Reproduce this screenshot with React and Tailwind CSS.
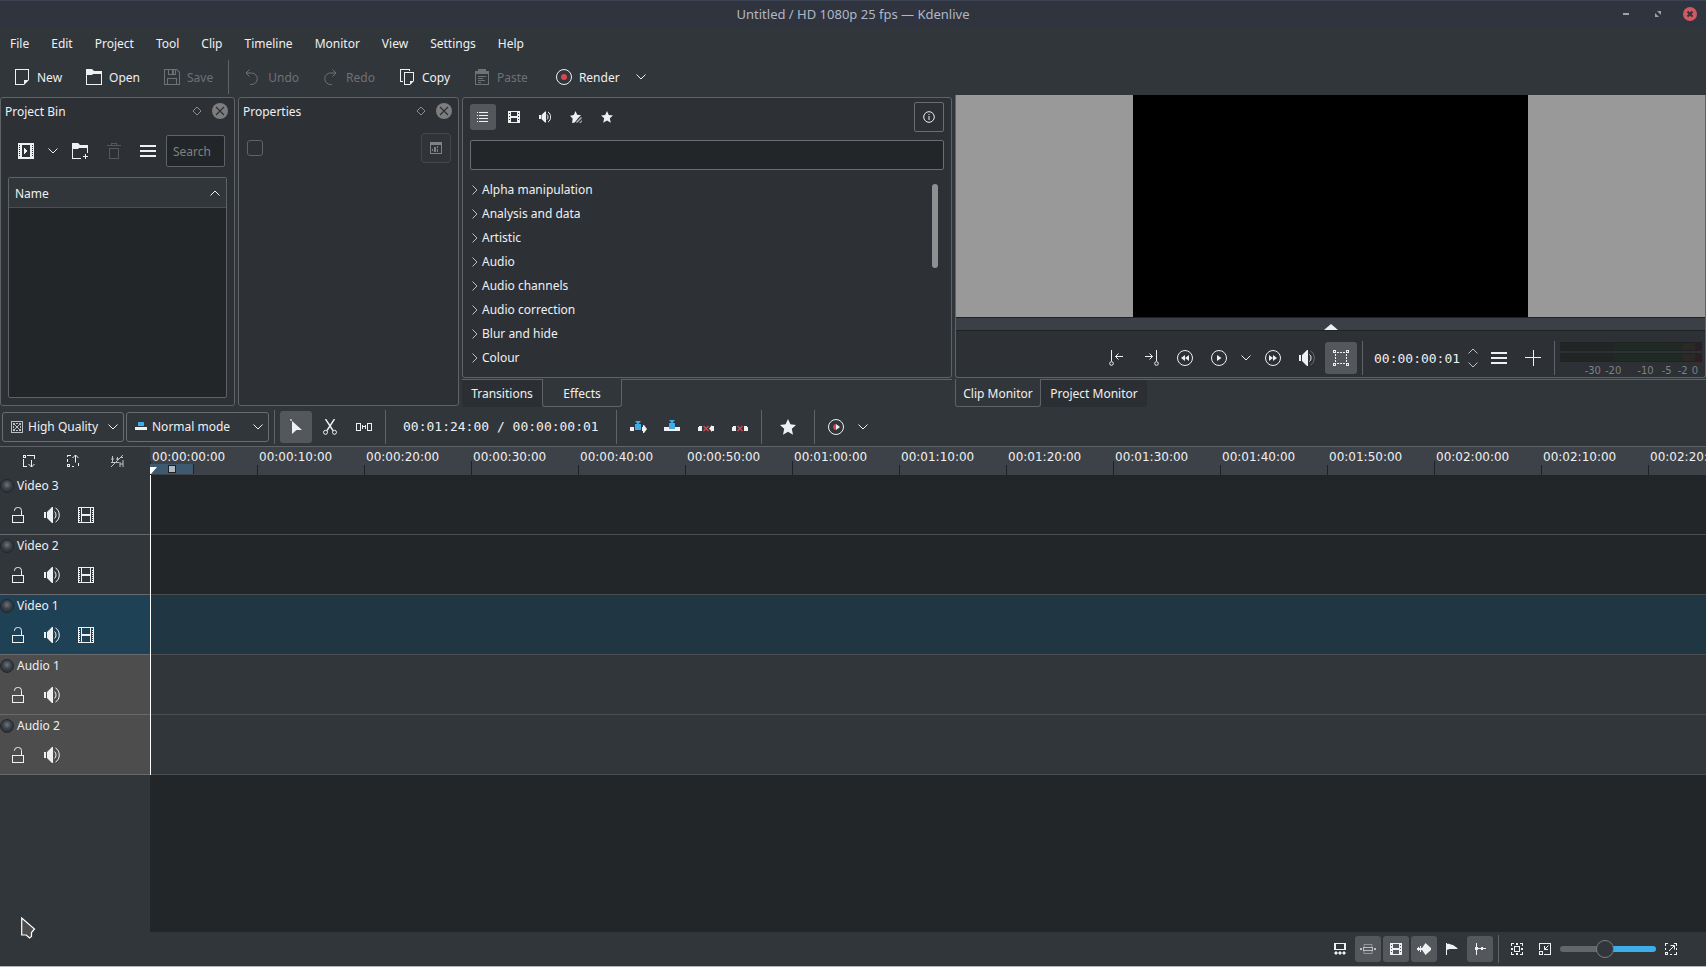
import { useState } from 'react'
import clsx from 'clsx'

const menus = ['File', 'Edit', 'Project', 'Tool', 'Clip', 'Timeline', 'Monitor', 'View', 'Settings', 'Help']

const effectGroups = [
    'Alpha manipulation',
    'Analysis and data',
    'Artistic',
    'Audio',
    'Audio channels',
    'Audio correction',
    'Blur and hide',
    'Colour',
]

const tracks = [
    { name: 'Video 3', type: 'video' },
    { name: 'Video 2', type: 'video' },
    { name: 'Video 1', type: 'video', active: true },
    { name: 'Audio 1', type: 'audio' },
    { name: 'Audio 2', type: 'audio' },
]

// one label every 10 seconds
const rulerMarks = Array.from({ length: 15 }, (_, i) => {
    const s = i * 10
    const mm = String(Math.floor(s / 60)).padStart(2, '0')
    const ss = String(s % 60).padStart(2, '0')
    return `00:${mm}:${ss}:00`
})

/* ---------- icons ---------- */

function Icon({ size = 16, children, crisp, className }) {
    return (
        <svg
            width={size}
            height={size}
            viewBox={`0 0 ${size} ${size}`}
            fill="currentColor"
            shapeRendering={crisp ? 'crispEdges' : 'auto'}
            className={clsx('shrink-0', className)}
            aria-hidden="true"
        >
            {children}
        </svg>
    )
}

const IconNew = () => (
    <Icon>
        <path fillRule="evenodd" d="M1 0h14v11l-5 5H1zM2 1v14h8v-4h4V1z" />
    </Icon>
)

const IconOpen = () => (
    <Icon>
        <path fillRule="evenodd" d="M0 0h6l2 2h8v14H0zM1 6v9h14V5H7L6 6z" />
    </Icon>
)

const IconSave = () => (
    <Icon>
        <path fillRule="evenodd" d="M0 0h13l3 3v13H0zM1 1v14h2V9h10v6h2V3.500L12.500 1H12v5H4V1zM5 1v4h3V1zM10 1v4h1V1zM4 10v5h8v-5z" />
    </Icon>
)

const IconUndo = () => (
    <Icon>
        <path d="M4.500.5L1 4l3.500 3.500M1 4h5.500a5.500 5.500 0 0 1 0 11.500H5" fill="none" stroke="currentColor" />
    </Icon>
)

const IconRedo = () => (
    <Icon>
        <path d="M9.500.5L13 4 9.500 7.500M13 4H7.500a5.500 5.500 0 0 0 0 11.500H9" fill="none" stroke="currentColor" />
    </Icon>
)

const IconCopy = () => (
    <Icon>
        <path fillRule="evenodd" d="M5 3h10v9l-4 4H5zM6 4v11h5v-3h3V4z" />
        <path d="M1 0h10v2h-1V1H2v11h2v1H1z" />
    </Icon>
)

const IconPaste = () => (
    <Icon>
        <path fillRule="evenodd" d="M1 2h3V0h8v2h3v14H1zM2 5v10h12V5z" />
        <path d="M4 7h8v1H4zM4 9h5v1H4zM4 11h7v1H4zM4 13h3v1H4z" />
    </Icon>
)

const IconRender = () => (
    <Icon>
        <circle cx="8" cy="8" r="7.500" fill="none" stroke="currentColor" />
        <circle cx="8" cy="8" r="3" fill="#da4453" />
    </Icon>
)

const IconChevron = ({ className }) => (
    <Icon size={10} className={className}>
        <path d="M.5 2.500L5 7l4.500-4.500" fill="none" stroke="currentColor" />
    </Icon>
)

const IconDiamond = () => (
    <Icon size={10}>
        <path d="M5 1L9 5 5 9 1 5z" fill="none" stroke="currentColor" />
    </Icon>
)

const IconClose = () => (
    <Icon>
        <circle cx="8" cy="8" r="8" />
        <path d="M4 4l8 8M12 4l-8 8" stroke="#2d3035" strokeWidth="1.200" />
    </Icon>
)

const IconAddClip = () => (
    <Icon crisp>
        <path fillRule="evenodd" d="M0 0h16v16H0zM4 2v12h8V2z" />
        <path d="M1 2h1v1H1zM1 4h1v1H1zM1 6h1v1H1zM1 8h1v1H1zM1 10h1v1H1zM1 12h1v1H1zM14 2h1v1h-1zM14 4h1v1h-1zM14 6h1v1h-1zM14 8h1v1h-1zM14 10h1v1h-1zM14 12h1v1h-1z" fill="#2d3035" />
        <path d="M6 5v6l4-3z" />
    </Icon>
)

const IconNewFolder = () => (
    <Icon>
        <path d="M0 0h6l2 2h8v8h-1V5H7L6 6H1v9h8v1H0z" />
        <path d="M13 11h1v2h2v1h-2v2h-1v-2h-2v-1h2z" />
    </Icon>
)

const IconTrash = () => (
    <Icon>
        <path fillRule="evenodd" d="M5 0h6v2h4v1H1V2h4zM6 1v1h4V1zM3 5h10v11H3zM4 6v9h8V6z" />
    </Icon>
)

const IconMenu = () => (
    <Icon crisp>
        <path d="M0 2h16v2H0zM0 7h16v2H0zM0 12h16v2H0z" />
    </Icon>
)

const IconCalendar = () => (
    <Icon size={12}>
        <path fillRule="evenodd" d="M0 0h12v12H0zM1 3v8h10V3z" />
        <path d="M2 7h1v2H2zM4 5h2v5H4zM7 4h1v2H7zM7 7h1v3H7z" />
    </Icon>
)

const IconList = () => (
    <Icon size={12} crisp>
        <path d="M0 1h1v1H0zM2 1h9v1H2zM0 4h1v1H0zM2 4h9v1H2zM0 7h1v1H0zM2 7h9v1H2zM0 10h1v1H0zM2 10h9v1H2z" />
    </Icon>
)

const IconFilmSmall = () => (
    <Icon size={12} crisp>
        <path fillRule="evenodd" d="M0 0h12v12H0zM3 1v4h6V1zM3 7v4h6V7zM1 2v1h1V2zM1 5v1h1V5zM1 8v1h1V8zM10 2v1h1V2zM10 5v1h1V5zM10 8v1h1V8z" />
    </Icon>
)

const IconFilm = () => (
    <Icon crisp>
        <path fillRule="evenodd" d="M0 0h16v16H0zM1 1v14h2V1zM4 1v6h8V1zM4 9v6h8V9zM13 1v14h2V1z" />
        <path d="M1 3h1v1H1zM1 5h1v1H1zM1 7h1v1H1zM1 9h1v1H1zM1 11h1v1H1zM1 13h1v1H1zM14 3h1v1h-1zM14 5h1v1h-1zM14 7h1v1h-1zM14 9h1v1h-1zM14 11h1v1h-1zM14 13h1v1h-1z" />
    </Icon>
)

const IconSpeaker = ({ dim }) => (
    <Icon>
        <path d="M0 5h2v6H0zM3 5l5-5h1v16H8l-5-5z" />
        <path d="M10.500 4.500c2 1.500 2 5.500 0 7" fill="none" stroke="currentColor" />
        <path d="M11.500 1c5 2.500 5 11.500 0 14" fill="none" stroke="currentColor" opacity={dim ? 0.3 : 1} />
    </Icon>
)

const IconSpeakerSmall = () => (
    <Icon size={12}>
        <path d="M0 4h2v4H0zM2.500 4L6 .5h1v11H6L2.500 8z" />
        <path d="M8 3.500c1.300 1 1.300 4 0 5M9 1c3.500 2 3.500 8 0 10" fill="none" stroke="currentColor" />
    </Icon>
)

const IconStar = ({ size = 16 }) => (
    <svg width={size} height={size} viewBox="0 0 16 16" fill="currentColor" aria-hidden="true">
        <path d="M8 0l2.400 5.300 5.600.6-4.200 3.900 1.200 5.900L8 12.700 3 15.700l1.200-5.900L0 5.900l5.600-.6z" />
    </svg>
)

const IconStarEdit = () => (
    <Icon size={12}>
        <path d="M5.500 0l1.700 3.800 3.800.5-2.800 2.700-3.400 4.500L2 12l.7-4.200L0 4.800l3.800-.7z" />
        <path d="M6 11l5-5 1 1-5 5zM9 12l3-3v1.500L10.500 12z" opacity=".7" />
    </Icon>
)

const IconInfo = () => (
    <Icon size={12}>
        <circle cx="6" cy="6" r="5.300" fill="none" stroke="currentColor" />
        <path d="M5.500 3h1v1h-1zM5.500 5h1v4h-1z" />
    </Icon>
)

const IconZoneIn = () => (
    <Icon>
        <path d="M2.500 0v11" stroke="currentColor" />
        <circle cx="2.500" cy="13.500" r="1.800" fill="none" stroke="currentColor" />
        <path d="M14 6.500H6.500M9.500 3.500l-3 3 3 3" fill="none" stroke="currentColor" />
    </Icon>
)

const IconZoneOut = () => (
    <Icon>
        <path d="M13.500 0v11" stroke="currentColor" />
        <circle cx="13.500" cy="13.500" r="1.800" fill="none" stroke="currentColor" />
        <path d="M2 6.500h7.500M6.500 3.500l3 3-3 3" fill="none" stroke="currentColor" />
    </Icon>
)

const Circle = () => <circle cx="8" cy="8" r="7.500" fill="none" stroke="currentColor" />

const IconRewind = () => (
    <Icon><Circle /><path d="M8 5v6L4 8zM12 5v6L8 8z" /></Icon>
)

const IconPlay = () => (
    <Icon><Circle /><path d="M6 5l4.500 3L6 11z" /></Icon>
)

const IconForward = () => (
    <Icon><Circle /><path d="M4 5l4 3-4 3zM8 5l4 3-4 3z" /></Icon>
)

const IconTransform = () => (
    <Icon crisp>
        <path fillRule="evenodd" d="M0 0h3v3H0zM1 1v1h1V1zM13 0h3v3h-3zM14 1v1h1V1zM0 13h3v3H0zM1 14v1h1v-1zM13 13h3v3h-3zM14 14v1h1v-1z" />
        <path d="M4 2.500h8M4 13.500h8" stroke="currentColor" strokeDasharray="2 1" />
        <path d="M2.500 4v8M13.500 4v8" stroke="currentColor" strokeDasharray="2 1" />
    </Icon>
)

const IconPlus = () => (
    <Icon crisp>
        <path d="M8 0h1v7h7v1H9v8H8V8H0V7h8z" />
    </Icon>
)

const IconQuality = () => (
    <Icon size={12}>
        <rect x=".5" y=".5" width="11" height="11" fill="none" stroke="#bdc0c2" />
        <path d="M2 2h2v2H2zM8 2h2v2H8zM5 5h2v2H5zM2 8h2v2H2zM8 8h2v2H8zM4 4h1v1H4zM7 4h1v1H7zM4 7h1v1H4zM7 7h1v1H7zM5 2h2v1H5zM5 9h2v1H5zM2 5h1v2H2zM9 5h1v2H9z" fill="#bdc0c2" />
    </Icon>
)

const IconNormalMode = () => (
    <Icon size={12}>
        <path d="M3 1h6v4H3z" fill="#3daee9" />
        <path d="M0 6h12v3H0z" />
    </Icon>
)

const IconPointer = () => (
    <Icon>
        <path d="M2 0h2v2H2z" opacity=".6" />
        <path d="M4 2l10 9H8.500L4 15z" />
    </Icon>
)

const IconScissors = () => (
    <Icon>
        <path d="M3.500 0l7.500 11.500M12.500 0L5 11.500" fill="none" stroke="currentColor" strokeWidth="1.400" />
        <circle cx="3.500" cy="13.300" r="2" fill="none" stroke="currentColor" />
        <circle cx="12.500" cy="13.300" r="2" fill="none" stroke="currentColor" />
    </Icon>
)

const IconSpacer = () => (
    <Icon crisp>
        <path fillRule="evenodd" d="M0 4h5v8H0zM1 5v6h3V5zM11 4h5v8h-5zM12 5v6h3V5z" />
        <path d="M6 6h1v1h2V6h1v4H9V8H7v2H6z" />
    </Icon>
)

const IconInsert = () => (
    <Icon size={18}>
        <path d="M6 3h6L9.500 6h-1zM6 6h6v6H6z" fill="#3daee9" />
        <path d="M1 9h4v4H1zM13 9h1V7h1l3 4-3 4h-1v-2h-1z" />
    </Icon>
)

const IconOverwrite = () => (
    <Icon>
        <path d="M5 1h6L8.500 4h-1zM5 4h6v6H5z" fill="#3daee9" />
        <path d="M0 8h5v2h6V8h5v4H0z" />
    </Icon>
)

const IconExtract = () => (
    <Icon>
        <path d="M0 8h1V7h3v5H0zM16 7v5h-2v1l-3-3.500L14 6v1z" />
        <path d="M5.500 7l5 5M10.500 7l-5 5" stroke="#da4453" strokeWidth="1.400" />
    </Icon>
)

const IconLift = () => (
    <Icon>
        <path d="M0 8h1V7h3v5H0zM12 7h3v1h1v4h-4z" />
        <path d="M5.500 7l5 5M10.500 7l-5 5" stroke="#da4453" strokeWidth="1.400" />
    </Icon>
)

const IconPreview = () => (
    <Icon>
        <Circle />
        <path d="M8 5v6c-4 0-4-6 0-6z" fill="#da4453" />
        <path d="M8 5l4 3-4 3z" />
    </Icon>
)

const IconInsertTracks = () => (
    <Icon size={12} className="overflow-visible">
        <path fillRule="evenodd" d="M0 0h3v3H0zM1 1v1h1V1zM4 0h8v4h-1V1H4zM0 4h1v7h3v1H0z" />
        <path d="M8.500 5v7M5.500 9l3 3 3-3" fill="none" stroke="currentColor" />
    </Icon>
)

const IconLiftTracks = () => (
    <Icon size={12} className="overflow-visible">
        <path fillRule="evenodd" d="M0 9h3v3H0zM1 10v1h1v-1zM0 0h4v1H1v1H0zM0 4h1v3H0zM5 11h2v1H5zM9 11h3V8h-1v3H9z" />
        <path d="M8.500 7.500V0M5.500 3l3-3 3 3" fill="none" stroke="currentColor" />
    </Icon>
)

const IconNoEffects = () => (
    <Icon size={12} className="overflow-visible">
        <path d="M0 4h3M1.500 1v6M0 7.500h8M5 4h3M6.500 2v4M0 12L12 0M9 7v5M12 5v7M9 9h3M12 2.500H9" fill="none" stroke="currentColor" />
    </Icon>
)

const IconLock = () => (
    <Icon>
        <path fillRule="evenodd" d="M2 8h12v8H2zM3 9v6h10V9z" />
        <path d="M4.500 4V3.500a3 3 0 0 1 3-3h1a3 3 0 0 1 3 3V8" fill="none" stroke="currentColor" />
    </Icon>
)

const IconMulti = () => (
    <Icon size={12}>
        <path fillRule="evenodd" d="M0 0h12v7H0zM2 1v5h8V1z" />
        <path d="M0 10l2-2 2 2 2-2 2 2 2-2 2 2-2 2-2-2-2 2-2-2-2 2z" />
    </Icon>
)

const IconSplit = () => (
    <Icon>
        <path d="M4 6V3.500h8V6M4 10v2.500h8V10" fill="none" stroke="currentColor" opacity=".6" />
        <path d="M3 6h10v4H3zM4 7v2h8V7z" fillRule="evenodd" />
        <path d="M0 7h2v2H0zM14 7h2v2h-2z" />
    </Icon>
)

const IconWave = () => (
    <Icon size={14}>
        <path d="M0 6h1V5h1v1h1V4h1v2h1l3.500-5L14 6v2l-5.500 5L5 8H4v2H3V8H2v1H1V8H0z" />
    </Icon>
)

const IconFlag = () => (
    <Icon size={12}>
        <path d="M0 0h1v12H0zM1 1c3-1 4 1 6 1l5 3.500C9 7 4 5 1 7z" />
    </Icon>
)

const IconSnap = () => (
    <Icon size={12}>
        <path d="M2 0h1v4h1v3H3v5H2V7H1V4h1zM4 5h2v1H4zM6 5h1V4h2v1h3v1H9v1H7V6H6z" />
    </Icon>
)

const IconZoomFit = () => (
    <Icon size={12} crisp>
        <path fillRule="evenodd" d="M3 3h6v6H3zM4 4v4h4V4z" />
        <path d="M0 0h3v1H1v2H0zM9 0h3v3h-1V1H9zM0 9h1v2h2v1H0zM11 9h1v3H9v-1h2zM5 0h2v2H5zM5 10h2v2H5zM0 5h2v2H0zM10 5h2v2h-2z" />
    </Icon>
)

const IconZoomOut = () => (
    <Icon size={12}>
        <path fillRule="evenodd" d="M0 0h12v12H5v-1h6V1H1v6H0zM0 8h4v4H0zM1 9v2h2V9z" />
        <path d="M9.500 2.500l-4 4M5.500 3v3.500H9" fill="none" stroke="currentColor" />
    </Icon>
)

const IconZoomIn = () => (
    <Icon size={12}>
        <path fillRule="evenodd" d="M0 9h3v3H0zM1 10v1h1v-1zM0 0h3v1H1v2H0zM0 5h1v2H0zM9 0h3v3h-1V1H9zM5 11h2v1H5zM11 9h1v3H9v-1h2zM11 5h1v2h-1z" />
        <path d="M4 8l5-5M5.500 2.500h4v4" fill="none" stroke="currentColor" />
    </Icon>
)

/* ---------- small shared pieces ---------- */

function Sep() {
    return <div className="mx-[3px] h-[34px] w-px shrink-0 bg-[#5f6367]" />
}

function ToolButton({ label, active, size = 'h-8 w-8', className, children }) {
    return (
        <button
            type="button"
            aria-label={label}
            className={clsx('flex shrink-0 items-center justify-center rounded-[3px]', size, active && 'bg-[#54575b]', className)}
        >
            {children}
        </button>
    )
}

function MainAction({ icon, label, disabled }) {
    return (
        <button type="button" disabled={disabled} className={clsx('flex items-center gap-[7px] px-3', disabled && 'text-[#6e7175]')}>
            {icon}
            <span className="pt-px">{label}</span>
        </button>
    )
}

function PanelHeader({ title }) {
    return (
        <div className="flex h-[26px] shrink-0 items-center pr-1.5 pl-1 text-[#8a8c8e]">
            <h2 className="flex-1 truncate pt-0.5 text-[#eff0f1]">{title}</h2>
            <button type="button" aria-label={`Float ${title}`} className="mr-2.5"><IconDiamond /></button>
            <button type="button" aria-label={`Close ${title}`} className="text-[#7d7d7d]"><IconClose /></button>
        </div>
    )
}

function TitleBar() {
    return (
        <header className="grid h-7 grid-cols-[1fr_auto_1fr] items-center border-t border-[#3b4252] bg-[#2f343f] text-[#afb8c5]">
            <span />
            <h1 className="pb-0.5 text-[13px] whitespace-nowrap">Untitled / HD 1080p 25 fps — Kdenlive</h1>
            <div className="flex items-center justify-end gap-[18px] pr-[9px] pb-px text-[#9ea3ad]">
                <button type="button" aria-label="Minimise">
                    <Icon size={14}><path d="M4 6h6v2H4z" /></Icon>
                </button>
                <button type="button" aria-label="Restore">
                    <Icon size={14}><path d="M6 4h4v4zM4 6l4 4H4z" /></Icon>
                </button>
                <button type="button" aria-label="Close">
                    <Icon size={14}>
                        <circle cx="7" cy="7" r="7" fill="#d05a62" />
                        <path d="M4.500 4.500l5 5M9.500 4.500l-5 5" stroke="#2f343f" strokeWidth="2" />
                    </Icon>
                </button>
            </div>
        </header>
    )
}

function ProjectBin() {
    return (
        <section className="mt-0.5 flex h-[309px] min-w-0 flex-col rounded-[3px] border border-[#5f6367] bg-[#2d3035]">
            <PanelHeader title="Project Bin" />
            <div className="mt-[11px] flex items-center gap-0.5 px-[9px]">
                <ToolButton label="Add clip"><IconAddClip /></ToolButton>
                <ToolButton label="More clip types" size="h-8 w-[18px]"><IconChevron /></ToolButton>
                <ToolButton label="Create folder"><IconNewFolder /></ToolButton>
                <ToolButton label="Delete" className="text-[#55585c]"><IconTrash /></ToolButton>
                <ToolButton label="Options"><IconMenu /></ToolButton>
                <input
                    type="text"
                    aria-label="Search"
                    placeholder="Search"
                    className="h-8 min-w-0 flex-1 rounded-[2px] border border-[#5f6367] bg-[#232629] px-1.5 placeholder:text-[#7f8183]"
                />
            </div>
            <div className="mx-[7px] mt-2.5 mb-[7px] flex-1 rounded-[2px] border border-[#5f6367] bg-[#232629]">
                <button type="button" className="flex h-[30px] w-full items-center justify-between border-b border-[#4b4f53] bg-[#31363b] px-1.5">
                    <span className="pt-0.5">Name</span>
                    <IconChevron className="rotate-180" />
                </button>
            </div>
        </section>
    )
}

function Properties() {
    return (
        <section className="mt-0.5 flex h-[309px] min-w-0 flex-col rounded-[3px] border border-[#5f6367] bg-[#2d3035]">
            <PanelHeader title="Properties" />
            <div className="mt-[9px] flex items-center justify-between pr-[7px] pl-2">
                <input
                    type="checkbox"
                    aria-label="Enable effects"
                    className="h-4 w-4 appearance-none rounded-[3px] border border-[#5f6367]"
                />
                <button type="button" aria-label="Split compare" className="flex h-[30px] w-[30px] items-center justify-center rounded-[3px] border border-[#43474b] bg-[#303438] text-[#7f8183]">
                    <IconCalendar />
                </button>
            </div>
        </section>
    )
}

function Effects() {
    const [query, setQuery] = useState('')

    const filters = [
        { label: 'All effects', icon: <IconList />, active: true },
        { label: 'Video effects', icon: <IconFilmSmall /> },
        { label: 'Audio effects', icon: <IconSpeakerSmall /> },
        { label: 'Custom effects', icon: <IconStarEdit /> },
        { label: 'Favourites', icon: <IconStar size={12} /> },
    ]

    return (
        <section className="min-w-0 pt-0.5">
            <div className="flex h-[281px] flex-col rounded-[3px] border border-[#5f6367] bg-[#2d3035] px-[7px] pt-1">
                <div className="flex items-center gap-[5px]">
                    {filters.map((f) => (
                        <ToolButton key={f.label} label={f.label} active={f.active} size="h-[26px] w-[26px]">
                            {f.icon}
                        </ToolButton>
                    ))}
                    <button type="button" aria-label="Show info" className="ml-auto flex h-[30px] w-[30px] items-center justify-center rounded-[2px] border border-[#6a6d71]">
                        <IconInfo />
                    </button>
                </div>
                <input
                    type="text"
                    aria-label="Search effects"
                    value={query}
                    onChange={(e) => setQuery(e.target.value)}
                    className="mt-2 h-[30px] w-full shrink-0 rounded-[2px] border border-[#6a6d71] bg-[#232629] px-1.5"
                />
                <div className="flex justify-between pt-2 pr-1.5">
                    <ul>
                        {effectGroups.map((g) => (
                            <li key={g}>
                                <button type="button" className="flex h-6 items-center gap-0.5">
                                    <IconChevron className="-rotate-90 text-[#bdc0c2]" />
                                    {g}
                                </button>
                            </li>
                        ))}
                    </ul>
                    <div className="mt-1.5 h-[84px] w-1.5 rounded-full bg-[#8f9092]" />
                </div>
            </div>
            <div className="mt-px flex h-7 border-t border-[#5f6367]" role="tablist">
                <button type="button" role="tab" aria-selected="false" className="w-20 rounded-bl-[3px] bg-[#2b2f33]">Transitions</button>
                <button type="button" role="tab" aria-selected="true" className="-mt-px w-20 rounded-b-[3px] border-x border-b border-[#5f6367] bg-[#31363b] pt-0.5">Effects</button>
            </div>
        </section>
    )
}

function MeterBar() {
    return (
        <div className="grid grid-cols-[54fr_54fr_16fr_12fr_6fr] border border-[#202326]">
            <span className="h-[7px] bg-[#212624]" />
            <span className="bg-[#202a25]" />
            <span className="bg-[#212925]" />
            <span className="bg-[#2c2924]" />
            <span className="bg-[#2c1f23]" />
        </div>
    )
}

function AudioMeter() {
    return (
        <div className="flex w-[142px] shrink-0 flex-col gap-0.5 pt-0.5 text-[#7f8183]">
            <MeterBar />
            <MeterBar />
            <div className="flex justify-end pt-px pr-1 font-['DejaVu_Sans',sans-serif] text-[10px] leading-3">
                <span className="mr-1">-30</span>
                <span className="mr-4">-20</span>
                <span className="mr-2">-10</span>
                <span className="mr-1.5">-5</span>
                <span className="mr-1">-2</span>
                <span>0</span>
            </div>
        </div>
    )
}

function ClipMonitor() {
    return (
        <section className="min-w-0">
            <div className="rounded-b-[3px] border-x border-b border-[#5f6367] bg-[#2d3035]">
                <div className="flex h-[222px] justify-center bg-[#999999]">
                    <div className="aspect-video h-full bg-black" />
                </div>
                <div className="flex h-3.5 items-end justify-center border-y border-[#1f2225] bg-[#3b4047]">
                    <svg width="14" height="6" viewBox="0 0 14 6" fill="#eff0f1" aria-hidden="true"><path d="M7 0l7 6H0z" /></svg>
                </div>
                <div className="flex h-[46px] items-center justify-end gap-0.5 pt-2 pr-[3px]">
                    <ToolButton label="Set zone start"><IconZoneIn /></ToolButton>
                    <ToolButton label="Set zone end"><IconZoneOut /></ToolButton>
                    <ToolButton label="Rewind"><IconRewind /></ToolButton>
                    <ToolButton label="Play"><IconPlay /></ToolButton>
                    <ToolButton label="Play options" size="h-8 w-[18px]"><IconChevron /></ToolButton>
                    <ToolButton label="Forward"><IconForward /></ToolButton>
                    <ToolButton label="Volume"><IconSpeaker dim /></ToolButton>
                    <ToolButton label="Edit mode" active><IconTransform /></ToolButton>
                    <Sep />
                    <input
                        type="text"
                        aria-label="Timecode"
                        defaultValue="00:00:00:01"
                        className="h-8 w-[97px] shrink-0 bg-transparent pl-1.5 font-['DejaVu_Sans_Mono',monospace] text-[13px]"
                    />
                    <div className="mr-0.5 flex w-3 flex-col items-center gap-1 text-[#bdc0c2]">
                        <button type="button" aria-label="Next frame"><IconChevron className="rotate-180" /></button>
                        <button type="button" aria-label="Previous frame"><IconChevron /></button>
                    </div>
                    <ToolButton label="Monitor options"><IconMenu /></ToolButton>
                    <ToolButton label="Add marker"><IconPlus /></ToolButton>
                    <Sep />
                    <AudioMeter />
                </div>
            </div>
            <div className="mt-px flex h-7 border-t border-[#5f6367]" role="tablist">
                <button type="button" role="tab" aria-selected="true" className="-mt-px w-[86px] rounded-b-[3px] border-x border-b border-[#5f6367] bg-[#31363b] pt-0.5">Clip Monitor</button>
                <button type="button" role="tab" aria-selected="false" className="w-[106px] rounded-br-[3px] bg-[#2b2f33]">Project Monitor</button>
            </div>
        </section>
    )
}

function ComboBox({ label, icon, value, className }) {
    return (
        <div className={clsx('relative flex h-[30px] shrink-0 items-center rounded-[3px] border border-[#6a6d71]', className)}>
            <span className="pointer-events-none absolute left-2">{icon}</span>
            <select aria-label={label} className="h-full w-full appearance-none bg-transparent pl-[25px]">
                <option className="bg-[#31363b]">{value}</option>
            </select>
            <IconChevron className="pointer-events-none absolute right-[5px]" />
        </div>
    )
}

function TimelineToolbar() {
    return (
        <div className="mt-px flex h-[39px] items-center gap-0.5 border-b border-[#5f6367] pl-0.5">
            <ComboBox label="Preview quality" icon={<IconQuality />} value="High Quality" className="w-[122px]" />
            <ComboBox label="Edit mode" icon={<IconNormalMode />} value="Normal mode" className="w-[143px]" />
            <Sep />
            <ToolButton label="Selection tool" active><IconPointer /></ToolButton>
            <ToolButton label="Razor tool"><IconScissors /></ToolButton>
            <ToolButton label="Spacer tool"><IconSpacer /></ToolButton>
            <Sep />
            <span className="w-[220px] shrink-0 pl-3 font-['DejaVu_Sans_Mono',monospace] text-[13px] whitespace-nowrap">00:01:24:00 / 00:00:00:01</span>
            <Sep />
            <ToolButton label="Insert zone"><IconInsert /></ToolButton>
            <ToolButton label="Overwrite zone"><IconOverwrite /></ToolButton>
            <ToolButton label="Extract zone"><IconExtract /></ToolButton>
            <ToolButton label="Lift zone"><IconLift /></ToolButton>
            <Sep />
            <ToolButton label="Favourite effects" size="h-8 w-[42px]"><IconStar /></ToolButton>
            <Sep />
            <ToolButton label="Preview render"><IconPreview /></ToolButton>
            <ToolButton label="Preview options" size="h-8 w-[18px]"><IconChevron /></ToolButton>
        </div>
    )
}

function Ruler() {
    return (
        <div className="flex h-7 shrink-0">
            <div className="flex w-[150px] shrink-0 items-center pl-[7px]">
                <ToolButton label="Insert track" size="h-7 w-11"><IconInsertTracks /></ToolButton>
                <ToolButton label="Track height" size="h-7 w-11"><IconLiftTracks /></ToolButton>
                <ToolButton label="Disable effects" size="h-7 w-11" className="text-[#bdc0c2]"><IconNoEffects /></ToolButton>
            </div>
            <div className="relative flex min-w-0 flex-1 overflow-hidden bg-[#3d4148]">
                {rulerMarks.map((mark, i) => (
                    <div key={mark} className="relative w-[107px] shrink-0 pt-[3px] pl-0.5 font-['DejaVu_Sans',sans-serif] text-[12px] leading-[14px]">
                        {mark}
                        <span className={clsx('absolute bottom-0 left-0 w-px bg-[#1f2225]', i % 3 === 0 ? 'h-3.5' : 'h-2.5')} />
                    </div>
                ))}
                {/* work zone */}
                <div className="absolute bottom-px left-0 flex h-2.5 w-11 items-center border-r border-[#1f2225] bg-[#3d5a70] pl-[18px]">
                    <span className="h-2 w-2 border border-[#1f2225] bg-[#b0b8c0]" />
                </div>
                <svg width="7" height="7" viewBox="0 0 7 7" fill="#fff" className="absolute bottom-px left-0" aria-hidden="true"><path d="M0 0h7L1 7H0z" /></svg>
            </div>
        </div>
    )
}

function Track({ track }) {
    const audio = track.type === 'audio'

    return (
        <div className="flex h-[60px]">
            <div
                className={clsx(
                    'w-[150px] shrink-0 border-b border-[#67696c]',
                    track.active && 'bg-[#1e4155]',
                    audio && 'bg-[#4d4d4d]'
                )}
            >
                <div className="flex h-[22px] items-center gap-[3px]">
                    <span className="h-3.5 w-3.5 rounded-full border border-[#23272b] bg-[radial-gradient(circle_at_50%_40%,#6b747c,#3a4047_45%,#24282c)]" />
                    <span>{track.name}</span>
                </div>
                <div className="flex h-[36px] items-center gap-0.5 pl-0.5">
                    <ToolButton label={`Lock ${track.name}`}><IconLock /></ToolButton>
                    <ToolButton label={`Mute ${track.name}`}><IconSpeaker /></ToolButton>
                    {!audio && <ToolButton label={`Hide ${track.name}`}><IconFilm /></ToolButton>}
                </div>
            </div>
            <div
                className={clsx(
                    'flex-1 border-b border-[#4b4e51]',
                    track.active && 'bg-[#203642]',
                    audio && 'bg-[#31363b]',
                    !track.active && !audio && 'bg-[#232629]'
                )}
            />
        </div>
    )
}

function StatusBar() {
    const [zoom, setZoom] = useState(46)
    const size = 'h-[26px] w-[26px]'

    return (
        <footer className="flex h-[34px] shrink-0 items-center justify-end gap-0.5 pr-[22px]">
            <ToolButton label="Split audio and video" size={size}><IconMulti /></ToolButton>
            <ToolButton label="Show colour tags" active size={size} className="text-[#bdc0c2]"><IconSplit /></ToolButton>
            <ToolButton label="Show video thumbnails" active size={size}><IconFilmSmall /></ToolButton>
            <ToolButton label="Show audio thumbnails" active size={size}><IconWave /></ToolButton>
            <ToolButton label="Show markers" size={size}><IconFlag /></ToolButton>
            <ToolButton label="Snap" active size={size}><IconSnap /></ToolButton>
            <div className="mx-[3px] h-7 w-px bg-[#5f6367]" />
            <ToolButton label="Fit zoom to project" size={size}><IconZoomFit /></ToolButton>
            <ToolButton label="Zoom out" size={size}><IconZoomOut /></ToolButton>
            <input
                type="range"
                aria-label="Zoom level"
                min="0"
                max="100"
                value={zoom}
                onChange={(e) => setZoom(Number(e.target.value))}
                style={{ '--zoom': `${zoom}%` }}
                className="h-[18px] w-24 appearance-none bg-transparent [&::-webkit-slider-runnable-track]:h-1.5 [&::-webkit-slider-runnable-track]:rounded-full [&::-webkit-slider-runnable-track]:bg-[linear-gradient(90deg,#63676a_var(--zoom),#3daee9_var(--zoom))] [&::-webkit-slider-thumb]:-mt-1.5 [&::-webkit-slider-thumb]:h-[18px] [&::-webkit-slider-thumb]:w-[18px] [&::-webkit-slider-thumb]:appearance-none [&::-webkit-slider-thumb]:rounded-full [&::-webkit-slider-thumb]:border [&::-webkit-slider-thumb]:border-[#7b7e81] [&::-webkit-slider-thumb]:bg-[#31363b]"
            />
            <ToolButton label="Zoom in" size={size}><IconZoomIn /></ToolButton>
        </footer>
    )
}

export default function App() {
    return (
        <div className="relative flex min-h-screen flex-col overflow-hidden bg-[#31363b] font-['Noto_Sans',sans-serif] text-[12px] leading-4 text-[#eff0f1]">
            <TitleBar />

            <nav className="flex h-8 items-center gap-0.5">
                {menus.map((m) => (
                    <button key={m} type="button" className="px-2.5">{m}</button>
                ))}
            </nav>

            <div className="flex h-[34px] items-center pl-0.5">
                <MainAction icon={<IconNew />} label="New" />
                <MainAction icon={<IconOpen />} label="Open" />
                <MainAction icon={<IconSave />} label="Save" disabled />
                <Sep />
                <div className="flex pl-px">
                    <MainAction icon={<IconUndo />} label="Undo" disabled />
                    <MainAction icon={<IconRedo />} label="Redo" disabled />
                    <MainAction icon={<IconCopy />} label="Copy" />
                    <MainAction icon={<IconPaste />} label="Paste" disabled />
                </div>
                <div className="flex items-center pl-1">
                    <MainAction icon={<IconRender />} label="Render" />
                    <ToolButton label="Render options" size="h-8 w-[18px]"><IconChevron /></ToolButton>
                </div>
            </div>

            <div className="mt-px grid grid-cols-[235fr_221fr_490fr_751fr] gap-[3px]">
                <ProjectBin />
                <Properties />
                <Effects />
                <ClipMonitor />
            </div>

            <TimelineToolbar />
            <Ruler />

            <div className="relative">
                {tracks.map((t) => <Track key={t.name} track={t} />)}
                {/* playhead */}
                <div className="absolute top-0 bottom-0 left-[150px] w-px bg-white" />
            </div>

            <div className="flex flex-1">
                <div className="w-[150px] shrink-0" />
                <div className="flex-1 bg-[#232629]" />
            </div>

            <StatusBar />
            <div className="h-px shrink-0 bg-[#b5b5b5]" />

            {/* mouse cursor */}
            <svg width="15" height="22" viewBox="0 0 15 22" className="absolute bottom-7 left-[21px]" aria-hidden="true">
                <path d="M.7 1v17h4.500l3.300 3 2-1.500v-4l3-3.500z" fill="#4d4d4d" stroke="#fff" strokeWidth="1.200" />
            </svg>
        </div>
    )
}
